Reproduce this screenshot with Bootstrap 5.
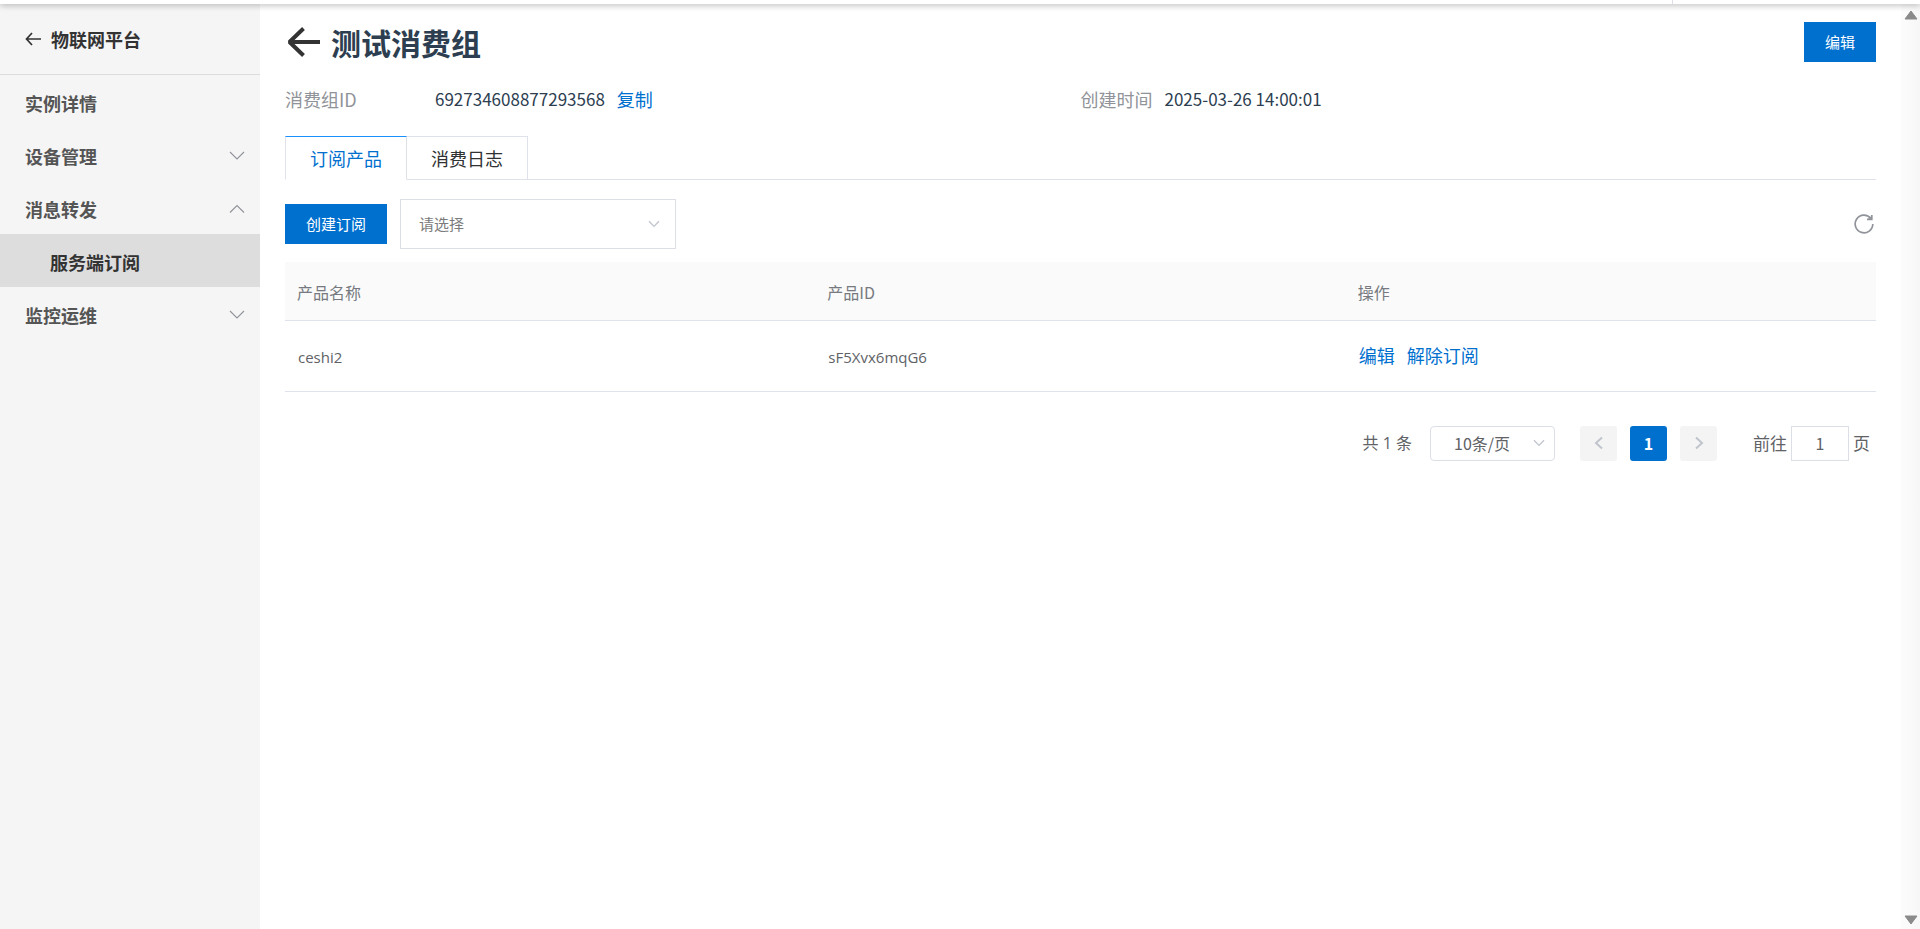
<!DOCTYPE html>
<html lang="zh-CN">
<head>
<meta charset="utf-8">
<meta name="viewport" content="width=device-width, initial-scale=1">
<title>测试消费组</title>
<link rel="stylesheet" href="https://cdn.jsdelivr.net/npm/bootstrap@5.3.0/dist/css/bootstrap.min.css">
<style>
:root { --brand: #0070cf; --line: #dfe2ea; }
body { font-family: "Noto Sans CJK SC", sans-serif; font-size: 17px; line-height: 24px; color: #2c3e50; background: #fff; }
a { color: var(--brand); text-decoration: none; }
.top-strip { height: 4px; background: #fff; box-shadow: 0 1px 6px rgba(0,0,0,.35); z-index: 5; padding-right: 247px; }
.top-strip .tick { border-left: 1px solid #dcdfe6; }

.side-menu { width: 260px; background: #f5f5f5; font-size: 18px; font-weight: 700; }
.side-menu a { color: #555; height: 53px; padding: 3px 15px 0 25px; }
.side-menu .side-head { height: 71px; padding: 0 25px; color: #333; gap: 10px; border-bottom: 1px solid #dcdcdc; }
.side-menu .sub-item { background: #ddd; color: #333; padding-left: 50px; }

.content-pane { padding: 18px 25px 0; }
.back-link { padding-left: 2px; margin-right: 10px; }
.page-title { font-size: 30px; line-height: 40px; font-weight: 700; }
.btn-brand { --bs-btn-color: #fff; --bs-btn-bg: var(--brand); --bs-btn-hover-color: #fff; --bs-btn-hover-bg: #0062b6; font-size: 15px; line-height: 20px; padding: 9px 20px; border-radius: 0; }
.info-row { margin-top: 25px; }
.info-label { color: #909399; font-size: 18px; }
.info-fixed { width: 150px; }
.info-link { font-size: 18px; }

.detail-tabs { --bs-nav-tabs-border-color: var(--line); margin-top: 25px; font-size: 18px; }
.detail-tabs .nav-link { border-radius: 0; border: 1px solid var(--line); border-left: 0; color: #303133; height: 44px; padding: 0 24px; }
.detail-tabs .nav-item:first-child .nav-link { border-left: 1px solid var(--line); }
.detail-tabs .nav-link.active { color: var(--brand); border-top-color: #1890ff; border-bottom-color: #fff; }

.toolbar-row { gap: 13px; padding: 19px 0 13px; }
.chev-select { appearance: none; border-radius: 0; border: 1px solid #dcdfe6; color: #7b7b7b; background-color: #fff; background-repeat: no-repeat;
  background-image: url("data:image/svg+xml,%3Csvg xmlns='http://www.w3.org/2000/svg' viewBox='0 0 12 8'%3E%3Cpath d='M1 1.2 6 6.4 11 1.2' fill='none' stroke='%23c0c4cc' stroke-width='1.3'/%3E%3C/svg%3E"); }
.filter-select { width: 276px; height: 50px; font-size: 15px; padding: 0 40px 0 18px; background-size: 12px 8px; background-position: right 15px center; }
.icon-btn { color: #909399; padding: 0 2px; }

.data-table { table-layout: fixed; font-size: 16px; --bs-table-bg: transparent; border-color: #dfe4ec; }
.data-table th { background: #fafafa; color: #767a80; font-weight: 400; height: 58px; padding: 2px 12px 0; vertical-align: middle; }
.data-table td { color: #606266; height: 71px; padding: 2px 13px 0; }
.data-table td.row-actions { font-size: 18px; padding-top: 0; padding-bottom: 2px; }
.data-table td.latin { font-size: 15px; }
.latin { font-family: "Open Sans", "Noto Sans CJK SC", sans-serif; }

.pager { font-size: 17px; color: #606266; margin-top: 34px; padding-right: 6px; }
.pager .total-count { font-size: 16px; margin-right: 18px; }
.pager .size-select { width: 125px; height: 35px; border-radius: 4px; font-size: 16px; padding: 0 32px 0 23px; color: #606266; background-size: 12px 8px; background-position: right 9px center; }
.pager .page-item .page-link { border: 0; border-radius: 3px; width: 37px; height: 35px; margin: 0; padding: 0; font-size: 16px; font-weight: 700; }
.pager .page-item.active .page-link { background: var(--brand); }
.pager .pagination { gap: 13px; margin: 0 36px 0 25px; }
.pager .disabled .page-link { background: #f4f4f4; color: #c0c4cc; }
.goto-box { width: 58px; height: 35px; border: 1px solid #dcdfe6; border-radius: 0; font-size: 16px; color: #606266; padding: 0; }

.scroll-rail { width: 19px; background: linear-gradient(90deg, #fcfcfc, #f7f7f7); padding: 6px 0 4px; }
</style>
</head>
<body class="vh-100 d-flex flex-column overflow-hidden">
<div class="top-strip position-relative d-flex justify-content-end flex-shrink-0"><div class="tick"></div></div>
<div class="d-flex flex-grow-1">
  <nav class="side-menu flex-shrink-0 d-flex flex-column">
    <a href="#" class="side-head d-flex align-items-center">
      <svg width="16" height="14" viewBox="0 0 16 14" fill="none" stroke="currentColor" stroke-width="1.7"><path d="M7 1 1.5 7 7 13M1.5 7H16"/></svg>
      <span>物联网平台</span>
    </a>
    <a href="#" class="d-flex align-items-center">实例详情</a>
    <a href="#" class="d-flex align-items-center justify-content-between">设备管理
      <svg width="16" height="10" viewBox="0 0 16 10" fill="none" stroke="#909399" stroke-width="1.1"><path d="M1 1 8 8 15 1"/></svg></a>
    <a href="#" class="d-flex align-items-center justify-content-between">消息转发
      <svg width="16" height="10" viewBox="0 0 16 10" fill="none" stroke="#909399" stroke-width="1.1"><path d="M1 8.500 8 1.500 15 8.500"/></svg></a>
    <a href="#" class="sub-item d-flex align-items-center">服务端订阅</a>
    <a href="#" class="d-flex align-items-center justify-content-between">监控运维
      <svg width="16" height="10" viewBox="0 0 16 10" fill="none" stroke="#909399" stroke-width="1.1"><path d="M1 1 8 8 15 1"/></svg></a>
  </nav>

  <main class="content-pane flex-grow-1">
    <header class="d-flex align-items-center">
      <a href="#" aria-label="返回" class="back-link d-flex"><svg width="34" height="30" viewBox="0 0 34 30" fill="none" stroke="#333" stroke-width="4"><path d="M16.500 1.500 2.500 15 16.500 28.500" stroke-linejoin="bevel"/><path d="M2 15H33"/></svg></a>
      <h1 class="page-title mb-0">测试消费组</h1>
      <button type="button" class="btn btn-brand ms-auto">编辑</button>
    </header>

    <div class="row g-0 info-row">
      <div class="col-6 d-flex">
        <span class="info-label info-fixed">消费组ID</span>
        <span>692734608877293568</span>
        <a href="#" class="info-link ms-2 ps-1">复制</a>
      </div>
      <div class="col-6 d-flex"><span class="info-label me-2 pe-1">创建时间</span><span>2025-03-26 14:00:01</span></div>
    </div>

    <ul class="nav nav-tabs detail-tabs" role="tablist">
      <li class="nav-item" role="presentation"><button type="button" class="nav-link active" role="tab" aria-selected="true">订阅产品</button></li>
      <li class="nav-item" role="presentation"><button type="button" class="nav-link" role="tab" aria-selected="false">消费日志</button></li>
    </ul>

    <div class="toolbar-row d-flex align-items-center">
      <button type="button" class="btn btn-brand">创建订阅</button>
      <select class="chev-select filter-select" aria-label="产品"><option>请选择</option></select>
      <button type="button" class="btn icon-btn border-0 ms-auto d-flex" aria-label="刷新">
        <svg width="20" height="20" viewBox="0 0 20 20" fill="none" stroke="currentColor" stroke-width="1.700"><path d="M18.800 10A8.800 8.800 0 1 1 16.800 4.400"/><path d="M17.800 1V5.300H13"/><path d="M14 4.500 17.500 2.500V5Z" fill="currentColor" stroke="none"/></svg>
      </button>
    </div>

    <table class="table data-table align-middle mb-0">
      <thead><tr><th scope="col">产品名称</th><th scope="col">产品ID</th><th scope="col">操作</th></tr></thead>
      <tbody><tr>
        <td class="latin">ceshi2</td>
        <td class="latin">sF5Xvx6mqG6</td>
        <td class="row-actions"><a href="#" class="me-2 pe-1">编辑</a><a href="#">解除订阅</a></td>
      </tr></tbody>
    </table>

    <div class="pager d-flex justify-content-end align-items-center">
      <span class="total-count latin">共 1 条</span>
      <select class="chev-select size-select" aria-label="每页条数"><option>10条/页</option></select>
      <ul class="pagination">
        <li class="page-item disabled"><button type="button" class="page-link d-flex align-items-center justify-content-center" aria-label="上一页" disabled><svg width="10" height="14" viewBox="0 0 10 14" fill="none" stroke="currentColor" stroke-width="2"><path d="M8 1.500 2 7 8 12.500"/></svg></button></li>
        <li class="page-item active"><button type="button" class="page-link">1</button></li>
        <li class="page-item disabled"><button type="button" class="page-link d-flex align-items-center justify-content-center" aria-label="下一页" disabled><svg width="10" height="14" viewBox="0 0 10 14" fill="none" stroke="currentColor" stroke-width="2"><path d="M2 1.500 8 7 2 12.500"/></svg></button></li>
      </ul>
      <label for="goto">前往</label>
      <input id="goto" class="goto-box text-center mx-1" type="text" value="1">
      <span>页</span>
    </div>
  </main>

  <div class="scroll-rail flex-shrink-0 d-flex flex-column justify-content-between align-items-center">
    <svg width="14" height="10" viewBox="0 0 14 10"><path d="M7 1 13 9H1Z" fill="#8a8a8a" stroke="#8a8a8a" stroke-linejoin="round"/></svg>
    <svg width="14" height="10" viewBox="0 0 14 10"><path d="M7 9 13 1H1Z" fill="#8a8a8a" stroke="#8a8a8a" stroke-linejoin="round"/></svg>
  </div>
</div>
<script src="https://cdn.jsdelivr.net/npm/bootstrap@5.3.0/dist/js/bootstrap.bundle.min.js"></script>
</body>
</html>
